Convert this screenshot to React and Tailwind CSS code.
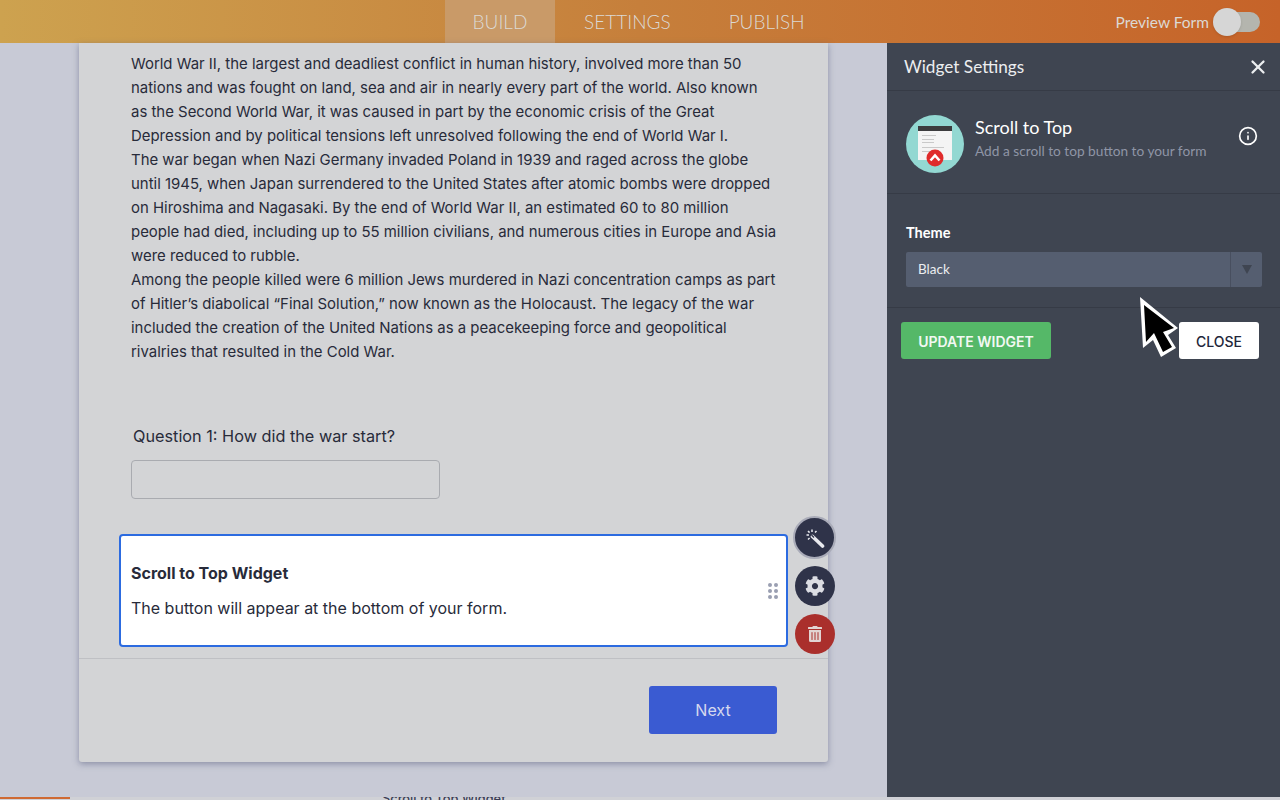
import React from "react";
import { FaCog, FaTrashAlt } from "react-icons/fa";
import { X, Info } from "lucide-react";

const para = [
  "World War II, the largest and deadliest conflict in human history, involved more than 50",
  "nations and was fought on land, sea and air in nearly every part of the world. Also known",
  "as the Second World War, it was caused in part by the economic crisis of the Great",
  "Depression and by political tensions left unresolved following the end of World War I.",
  "The war began when Nazi Germany invaded Poland in 1939 and raged across the globe",
  "until 1945, when Japan surrendered to the United States after atomic bombs were dropped",
  "on Hiroshima and Nagasaki. By the end of World War II, an estimated 60 to 80 million",
  "people had died, including up to 55 million civilians, and numerous cities in Europe and Asia",
  "were reduced to rubble.",
  "Among the people killed were 6 million Jews murdered in Nazi concentration camps as part",
  "of Hitler’s diabolical “Final Solution,” now known as the Holocaust. The legacy of the war",
  "included the creation of the United Nations as a peacekeeping force and geopolitical",
  "rivalries that resulted in the Cold War.",
];

function WidgetIcon() {
  return (
    <svg width="58" height="58" viewBox="0 0 58 58" className="shrink-0">
      <circle cx="29" cy="29" r="29" fill="#93d8d2" />
      <rect x="12" y="11" width="34" height="34" fill="#f4f4f4" />
      <rect x="12" y="11" width="34" height="5" fill="#3c3c3e" />
      <rect x="16" y="20" width="14" height="1" fill="#c9c9c9" />
      <rect x="16" y="24" width="12" height="1" fill="#c9c9c9" />
      <rect x="16" y="27" width="12" height="1" fill="#c9c9c9" />
      <rect x="16" y="32" width="22" height="1" fill="#c9c9c9" />
      <rect x="16" y="36" width="10" height="1" fill="#c9c9c9" />
      <circle cx="29" cy="43" r="8.5" fill="#e02b2b" />
      <path d="M24.5 45.5 L29 40.5 L33.5 45.5" fill="none" stroke="#fff" strokeWidth="2.6" />
    </svg>
  );
}

function Wand() {
  return (
    <svg width="20" height="20" viewBox="0 0 20 20">
      <path d="M7.5 8.5 L17.5 18" stroke="#e8e9ee" strokeWidth="3.6" strokeLinecap="round" />
      <path d="M6.5 7 L9 9.5" stroke="#2f3349" strokeWidth="1.2" />
      <path d="M7 1.5V4M1.5 7H4M3 3L4.6 4.6M11.5 3L10 4.6M3 11.5L4.6 10" stroke="#e8e9ee" strokeWidth="1.5" />
    </svg>
  );
}

export default function App() {
  return (
    <div className="relative w-[1280px] h-[800px] overflow-hidden bg-[#c8cad6] flex flex-col font-['Inter',sans-serif]">
      <header className="h-[43px] shrink-0 flex items-stretch bg-gradient-to-r from-[#cda24f] via-[#c67f3b] to-[#c66329] font-['Lato',sans-serif] text-[#dcd9d4]">
        <nav className="ml-[445px] flex items-stretch text-[19px] font-light">
          <div className="w-[110px] h-[44px] pt-[1px] flex items-center justify-center bg-[#c99a68]">BUILD</div>
          <div className="ml-[29px] pt-[2px] flex items-center">SETTINGS</div>
          <div className="ml-[58px] pt-[2px] flex items-center">PUBLISH</div>
        </nav>
        <div className="ml-auto flex items-center pr-[20px] text-[15.5px]">
          <span className="mr-[5px] pt-[2px]">Preview Form</span>
          <div className="relative w-[46px] h-[20px] rounded-full bg-[#b4b5ae]">
            <div className="absolute left-[-1px] top-[-4px] w-[28px] h-[28px] rounded-full bg-[#d6d6d6] shadow" />
          </div>
        </div>
      </header>

      <div className="flex-1 flex min-h-0">
        <main className="w-[887px] shrink-0 pl-[79px]">
          <section className="w-[749px] h-[719px] bg-[#d3d4d6] rounded-b-[3px] shadow-[0_2px_6px_rgba(90,95,125,0.55)] flex flex-col text-[#282b3a]">
            <div className="pt-[9px] pl-[52px] text-[14.93px] leading-[24px] whitespace-nowrap">
              {para.map((l) => (
                <div key={l}>{l}</div>
              ))}
            </div>
            <div className="mt-[60px] pl-[54px] text-[16.25px] leading-[24px]">Question 1: How did the war start?</div>
            <div className="mt-[12px] ml-[52px] w-[309px] h-[39px] rounded-[4px] border border-[#a9abb0]" />
            <div className="mt-[35px] ml-[40px] w-[669px] h-[113px] rounded-[4px] border-2 border-[#2c6be0] bg-white flex items-center pl-[10px] pr-[8px]">
              <div className="flex-1">
                <div className="text-[16px] font-bold leading-[24px]">Scroll to Top Widget</div>
                <div className="mt-[11px] text-[16px] leading-[24px]">The button will appear at the bottom of your form.</div>
              </div>
              <div className="grid grid-cols-2 gap-x-[2px] gap-y-[2px]">
                {[0, 1, 2, 3, 4, 5].map((i) => (
                  <span key={i} className="w-[4px] h-[4px] rounded-full bg-[#9a9fb2]" />
                ))}
              </div>
            </div>
            <div className="mt-[11px] border-t border-[#bfc0c4] flex-1 flex justify-end items-start pr-[51px] pt-[27px]">
              <button className="w-[128px] h-[48px] rounded-[3px] bg-[#3a5bd2] text-[#d5d9ee] text-[16px]">Next</button>
            </div>
          </section>
        </main>

        <aside className="w-[393px] bg-[#3f4551] text-white font-['Lato',sans-serif] flex flex-col">
          <div className="h-[48px] shrink-0 flex items-center justify-between pl-[17px] pr-[11px] border-b border-[#363b46] text-[17.2px] text-[#eceef0]">
            <span>Widget Settings</span>
            <X size={22} strokeWidth={2.5} />
          </div>
          <div className="h-[103px] shrink-0 flex items-center pl-[19px] pr-[22px] pt-[3px] border-b border-[#363b46]">
            <WidgetIcon />
            <div className="ml-[11px] flex-1 mt-[-11px]">
              <div className="text-[18px] leading-[22px]">Scroll to Top</div>
              <div className="mt-[4px] text-[13.7px] leading-[18px] text-[#8f95a6]">Add a scroll to top button to your form</div>
            </div>
            <Info size={20} className="mb-[15px]" />
          </div>
          <div className="h-[114px] shrink-0 pl-[19px] pr-[18px] border-b border-[#363b46]">
            <div className="mt-[29px] text-[14.5px] font-bold leading-[20px]">Theme</div>
            <div className="mt-[9px] h-[35px] flex bg-[#555e70] rounded-[2px]">
              <div className="flex-1 pl-[12px] flex items-center text-[13.5px] text-[#eceef0]">Black</div>
              <div className="w-[32px] border-l border-[#484f5f] flex items-center justify-center">
                <div className="w-0 h-0 border-x-[5px] border-x-transparent border-t-[9px] border-t-[#3f4551]" />
              </div>
            </div>
          </div>
          <div className="flex justify-between pl-[14px] pr-[21px] pt-[14px] font-['Inter',sans-serif] font-medium">
            <button className="w-[150px] h-[37px] pt-[1px] rounded-[3px] bg-[#55b868] text-[14px] font-semibold text-[#f2f8f3]">UPDATE WIDGET</button>
            <button className="w-[80px] h-[37px] pt-[1px] rounded-[3px] bg-white text-[#22263a] text-[14px]">CLOSE</button>
          </div>
        </aside>
      </div>

      <div className="absolute left-[793px] top-[516px] w-[43px] h-[43px] rounded-full bg-[#2f3349] border-2 border-[#a9abb8] flex items-center justify-center">
        <Wand />
      </div>
      <div className="absolute left-[795px] top-[566px] w-[40px] h-[40px] rounded-full bg-[#2f3349] flex items-center justify-center text-[#dcdde3]">
        <FaCog size={20} />
      </div>
      <div className="absolute left-[795px] top-[614px] w-[40px] h-[40px] rounded-full bg-[#aa2f2c] flex items-center justify-center text-[#e2d4d3]">
        <FaTrashAlt size={16} />
      </div>

      <svg className="absolute left-[1135px] top-[290px]" width="50" height="72" viewBox="0 0 50 72">
        <path d="M5 7 L8 58 L18 50 L26 67 L41 58 L33 45 L43 38 Z" fill="#fff" />
        <path d="M9 15 L11 52 L19 43 L28 62 L37 57 L28 42 L39 38 Z" fill="#000" />
      </svg>

      <div className="absolute left-0 bottom-0 w-full h-[3px] bg-[#d0d1d6]">
        <div className="w-[70px] h-[2px] bg-[#cf6a33]" />
      </div>
      <div className="absolute left-[382px] top-[797px] text-[#3a3d55] text-[12.8px] leading-[3px] h-[3px] overflow-hidden whitespace-nowrap font-medium">Scroll to Top Widget</div>
    </div>
  );
}
